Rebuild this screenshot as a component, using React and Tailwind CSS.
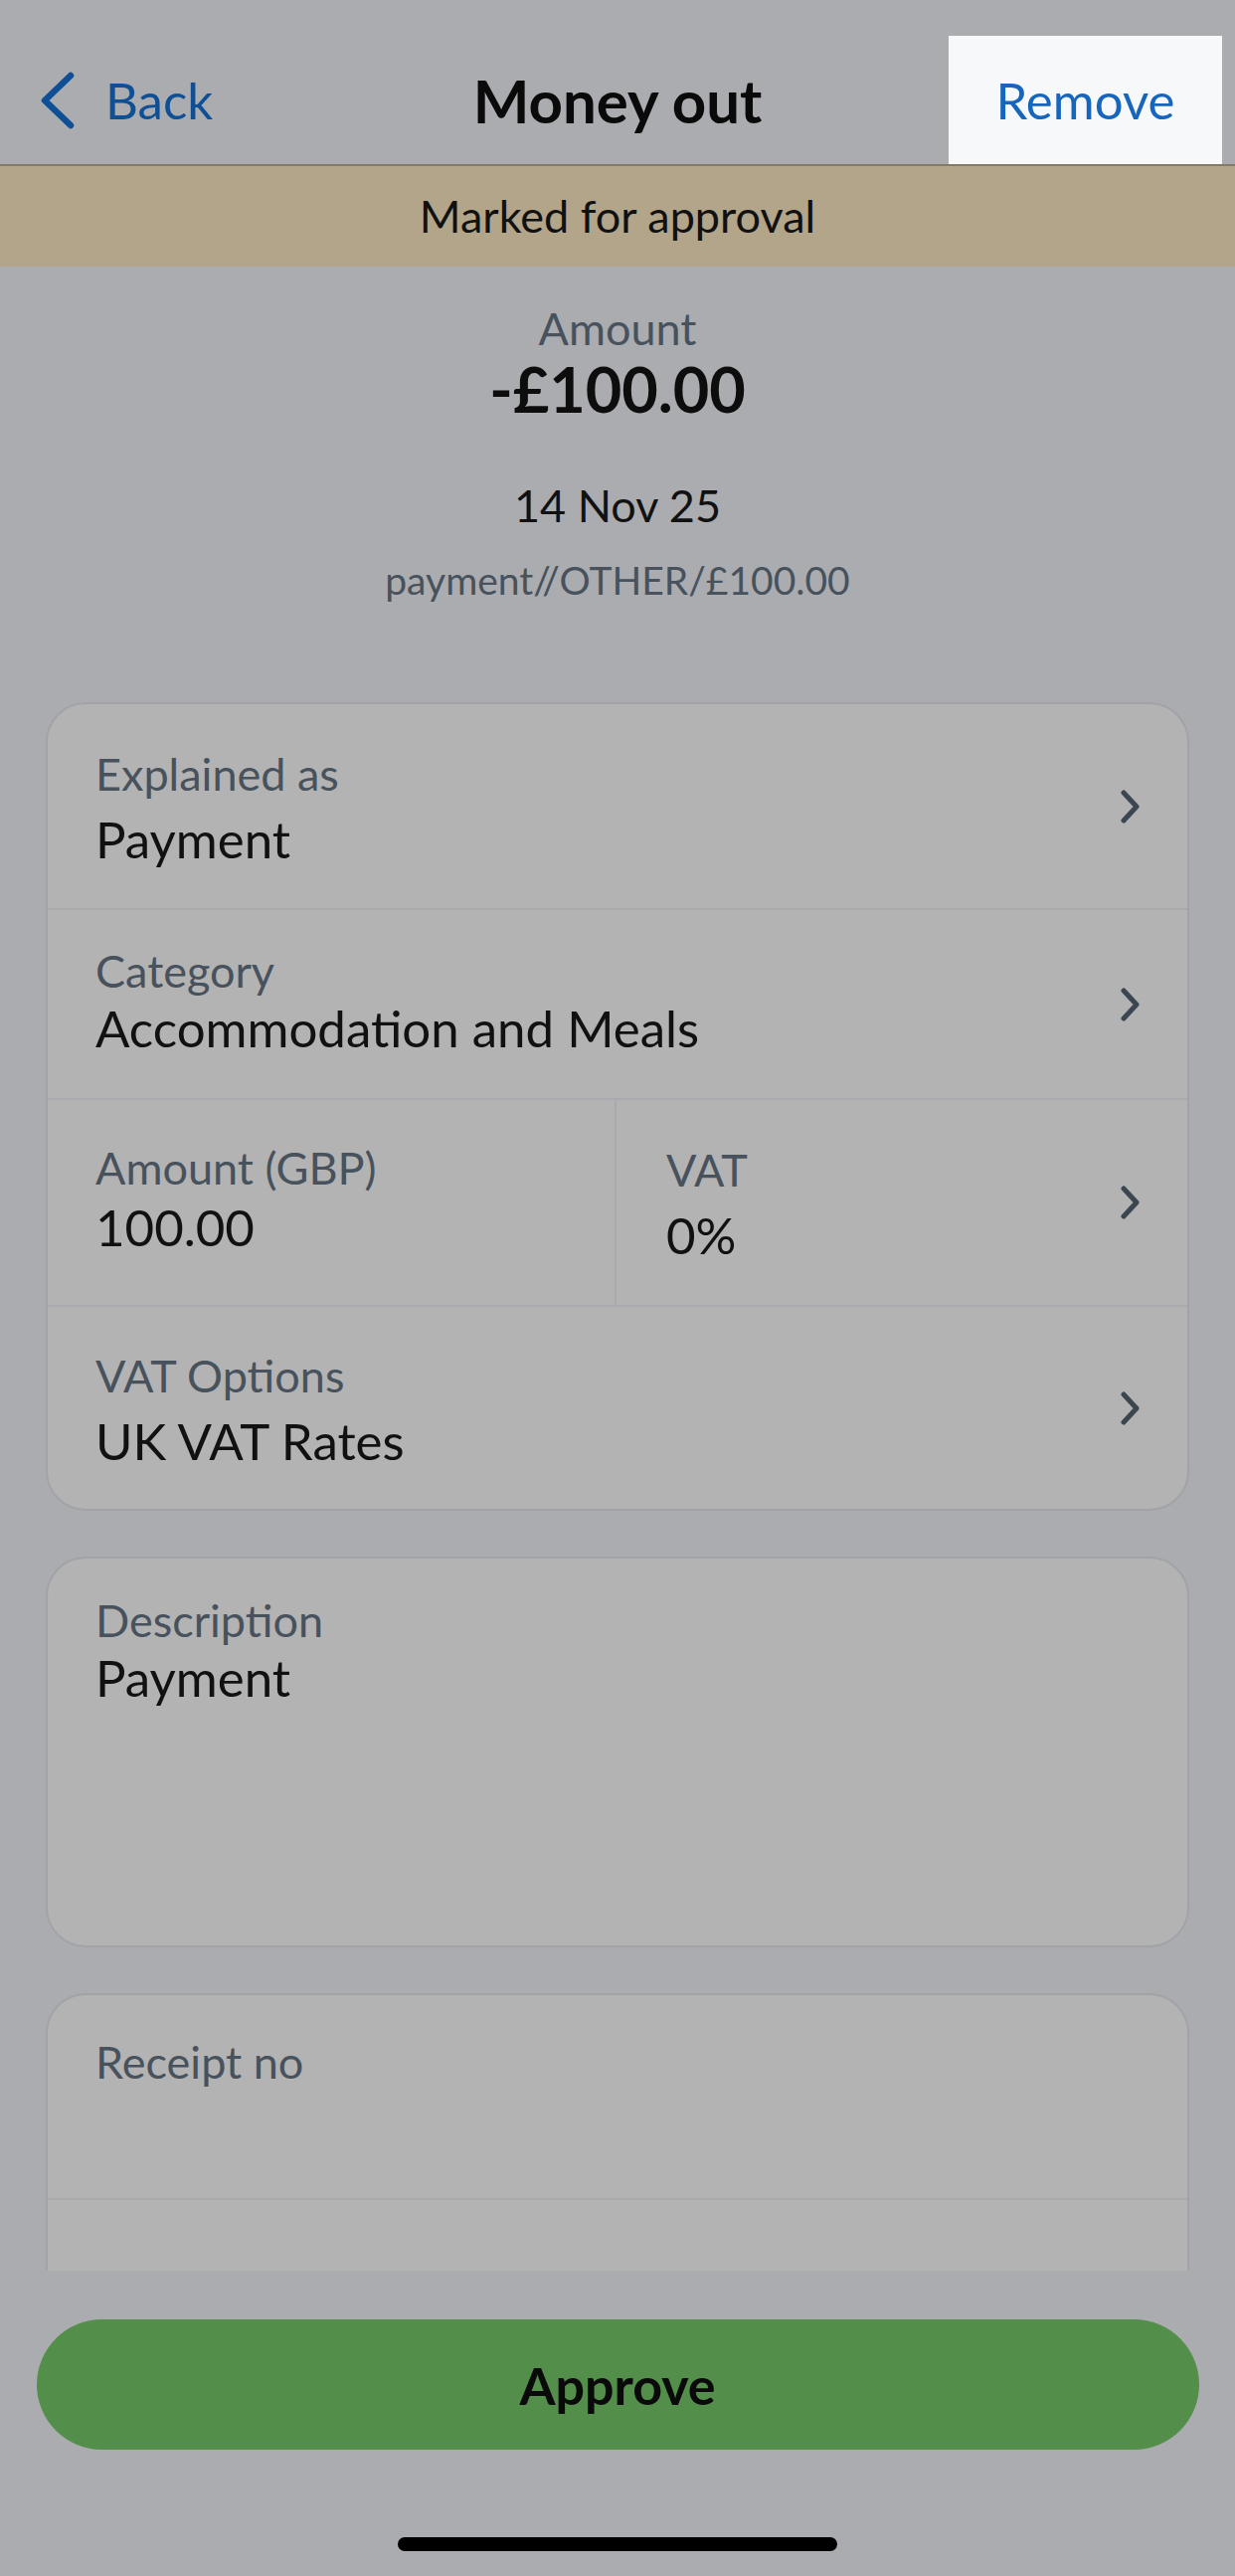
import React from "react";

const Chevron = () => (
  <svg width="22" height="34" viewBox="0 0 22 34" className="shrink-0">
    <polyline points="4,3 17,17 4,31" fill="none" stroke="#3b4650" strokeWidth="5" strokeLinecap="round" strokeLinejoin="round" />
  </svg>
);

function Row({ label, value, h, pt, gap, border = true }) {
  return (
    <div
      className={`flex items-center shrink-0 pr-[46px] ${border ? "border-b-2 border-[#a9aaae]" : ""}`}
      style={{ height: h }}
    >
      <div className="flex-1 pl-[48px] self-start flex flex-col" style={{ paddingTop: pt }}>
        <div className="text-[45px] leading-[1.2] text-[#47525d]">{label}</div>
        <div className="text-[51px] leading-[1.2] text-[#111111]" style={{ marginTop: gap }}>{value}</div>
      </div>
      <Chevron />
    </div>
  );
}

export default function App() {
  return (
    <div
      className="w-[1242px] h-[2590px] bg-[#abacb0] flex flex-col overflow-hidden"
      style={{ fontFamily: "Lato, 'Open Sans', sans-serif" }}
    >
      {/* Header */}
      <div className="h-[165px] shrink-0 pt-[36px] grid grid-cols-[1fr_auto_1fr] items-center">
        <div className="flex items-center pl-[40px] gap-[30px] text-[#0e4f95]">
          <svg width="36" height="58" viewBox="0 0 36 58">
            <polyline points="31,4 5,29 31,54" fill="none" stroke="#0e4f95" strokeWidth="6.5" strokeLinecap="round" strokeLinejoin="round" />
          </svg>
          <span className="text-[51px] leading-[1.2]">Back</span>
        </div>
        <div className="text-[60px] leading-[1.2] font-bold text-[#0a0a0a]">Money out</div>
        <div className="flex justify-end pr-[13px] h-full">
          <div className="w-[275px] h-full bg-[#f7f8fa] flex items-center justify-center text-[51px] leading-[1.2] text-[#1766bd]">
            Remove
          </div>
        </div>
      </div>

      {/* Band */}
      <div className="h-[103px] shrink-0 border-t-2 border-[#857a66] bg-[#b2a589] flex items-center justify-center text-[45px] text-[#111111]">
        Marked for approval
      </div>

      {/* Scroll area */}
      <div className="h-[2015px] shrink-0 overflow-hidden flex flex-col">
        <div className="flex flex-col items-center pt-[35px] shrink-0">
          <div className="text-[45px] leading-[1.2] text-[#47525d]">Amount</div>
          <div className="text-[63px] leading-[1.2] font-bold text-[#0d0d0d] -mt-[4px]">-£100.00</div>
          <div className="text-[45px] leading-[1.2] text-[#111111] mt-[52px]">14 Nov 25</div>
          <div className="text-[39px] leading-[1.2] text-[#47525d] mt-[25px]">payment//OTHER/£100.00</div>
        </div>

        <div className="mx-[46px] mt-[100px] shrink-0 rounded-[40px] border-2 border-[#a2a3a7] bg-[#b3b3b3] overflow-hidden">
          <Row label="Explained as" value="Payment" h={207} pt={43} gap={8} />
          <Row label="Category" value="Accommodation and Meals" h={191} pt={34} gap={0} />
          <div className="flex h-[208px] border-b-2 border-[#a9aaae]">
            <div className="w-[572px] border-r-2 border-[#a9aaae] pl-[48px] pt-[41px] flex flex-col">
              <div className="text-[45px] leading-[1.2] text-[#47525d]">Amount (GBP)</div>
              <div className="text-[51px] leading-[1.2] text-[#111111] mt-[2px]">100.00</div>
            </div>
            <div className="flex-1 flex items-center pr-[46px]">
              <div className="flex-1 pl-[50px] self-start pt-[43px] flex flex-col">
                <div className="text-[45px] leading-[1.2] text-[#47525d]">VAT</div>
                <div className="text-[51px] leading-[1.2] text-[#111111] mt-[8px]">0%</div>
              </div>
              <Chevron />
            </div>
          </div>
          <Row label="VAT Options" value="UK VAT Rates" h={203} pt={42} gap={8} border={false} />
        </div>

        <div className="mx-[46px] mt-[46px] h-[393px] shrink-0 rounded-[40px] border-2 border-[#a2a3a7] bg-[#b3b3b3] pl-[48px] pt-[35px] flex flex-col">
          <div className="text-[45px] leading-[1.2] text-[#47525d]">Description</div>
          <div className="text-[51px] leading-[1.2] text-[#111111]">Payment</div>
        </div>

        <div className="mx-[46px] mt-[46px] shrink-0 rounded-t-[40px] border-2 border-b-0 border-[#a2a3a7] bg-[#b3b3b3]">
          <div className="h-[206px] border-b-2 border-[#a9aaae] pl-[48px] pt-[40px]">
            <div className="text-[45px] leading-[1.2] text-[#47525d]">Receipt no</div>
          </div>
          <div className="h-[160px]"></div>
        </div>
      </div>

      {/* Footer */}
      <div className="flex-1 flex flex-col items-center">
        <div className="mt-[49px] w-[1169px] h-[131px] shrink-0 rounded-full bg-[#538e4a] flex items-center justify-center text-[52px] font-bold text-[#0a0a0a]">
          Approve
        </div>
        <div className="mt-[88px] w-[442px] h-[14px] shrink-0 rounded-full bg-black"></div>
      </div>
    </div>
  );
}
